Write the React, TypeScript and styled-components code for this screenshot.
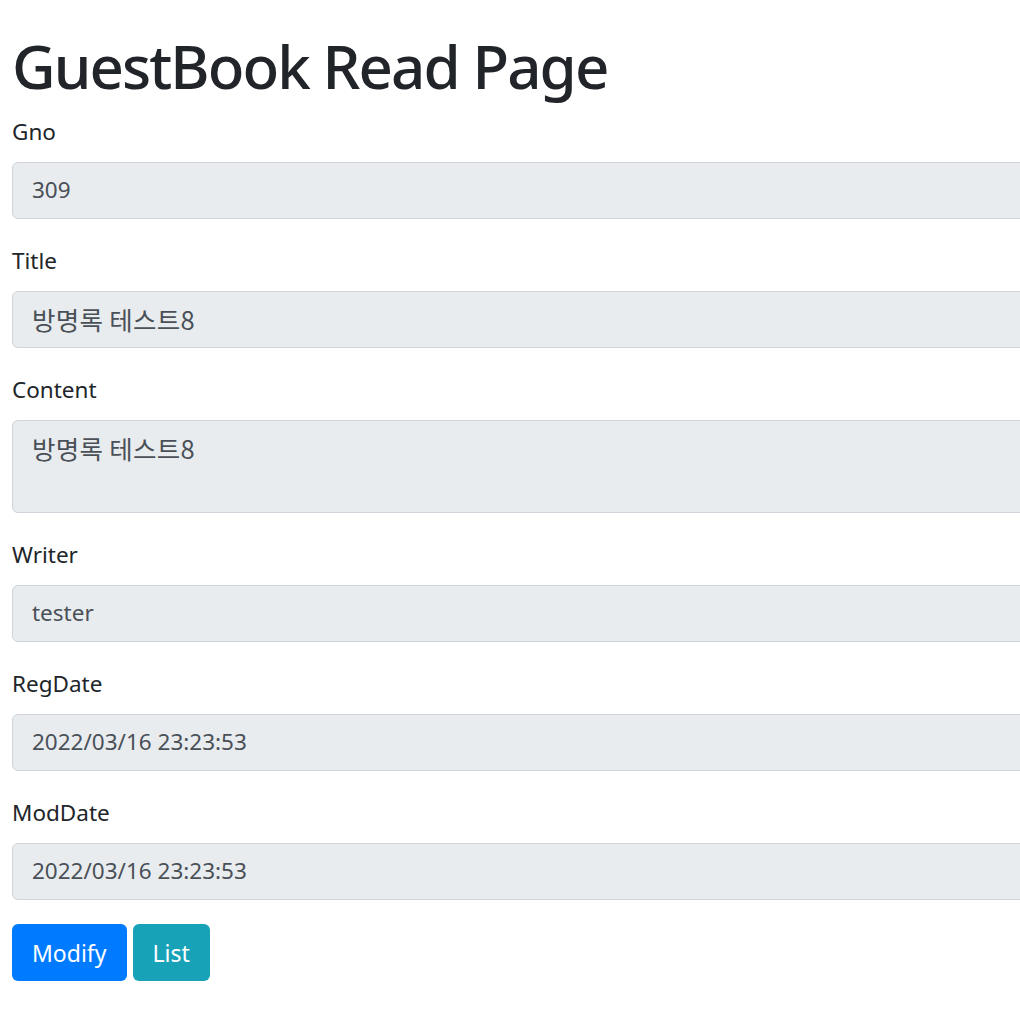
import React from "react";
import styled, { createGlobalStyle } from "styled-components";

const GlobalStyle = createGlobalStyle`
  html, body {
    margin: 0;
    padding: 0;
    overflow: hidden;
    background: #fff;
  }
  body {
    font-family: "Noto Sans", "Noto Sans CJK KR", sans-serif;
    color: #212529;
  }
`;

const Page = styled.div`
  padding: 30px 0 0 12px;
  width: 1200px;
`;

const Title = styled.h1`
  margin: 0 0 12px;
  font-size: 60px;
  line-height: 72px;
  font-weight: 500;
  color: #212529;
  letter-spacing: -1.9px;
`;

const FormGroup = styled.div`
  margin-bottom: 24px;
`;

const Label = styled.label`
  display: block;
  margin-bottom: 12px;
  font-size: 22.5px;
  line-height: 36px;
`;

const Field = styled.div<{ $rows?: number }>`
  box-sizing: border-box;
  width: 100%;
  height: ${({ $rows = 1 }) => $rows * 36 + 21}px;
  padding: 9px 19px;
  background: #e9ecef;
  border: 1.5px solid #ced4da;
  border-radius: 6px;
  color: #495057;
  font-size: 22.5px;
  line-height: 36px;
`;

const Hangul = styled.span`
  font-family: "Noto Sans CJK KR", sans-serif;
  font-size: 25.5px;
  letter-spacing: 0.3px;
`;

const Actions = styled.div`
  display: flex;
  gap: 6px;
`;

const Button = styled.button<{ $variant: "primary" | "info" }>`
  height: 57px;
  padding: 0 20px;
  border: none;
  border-radius: 6px;
  font-family: inherit;
  font-size: 23px;
  color: #fff;
  background: ${({ $variant }) => ($variant === "primary" ? "#007bff" : "#17a2b8")};
  cursor: pointer;
`;

const fields: { label: string; value: string; korean?: boolean; rows?: number }[] = [
  { label: "Gno", value: "309" },
  { label: "Title", value: "방명록 테스트8", korean: true },
  { label: "Content", value: "방명록 테스트8", korean: true, rows: 2 },
  { label: "Writer", value: "tester" },
  { label: "RegDate", value: "2022/03/16 23:23:53" },
  { label: "ModDate", value: "2022/03/16 23:23:53" },
];

const App = () => {
  return (
    <>
      <GlobalStyle />
      <Page>
        <Title>GuestBook Read Page</Title>
        {fields.map((f) => (
          <FormGroup key={f.label}>
            <Label>{f.label}</Label>
            <Field $rows={f.rows}>
              {f.korean ? <Hangul>{f.value}</Hangul> : f.value}
            </Field>
          </FormGroup>
        ))}
        <Actions>
          <Button $variant="primary">Modify</Button>
          <Button $variant="info">List</Button>
        </Actions>
      </Page>
    </>
  );
};

export default App;
